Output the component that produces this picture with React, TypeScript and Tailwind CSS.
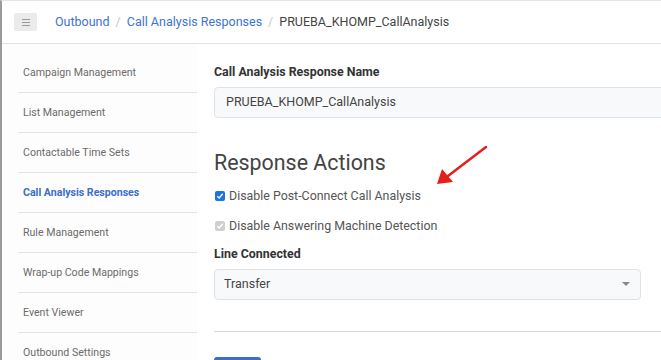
import React from "react";

const sideItems = [
  "Campaign Management",
  "List Management",
  "Contactable Time Sets",
  "Call Analysis Responses",
  "Rule Management",
  "Wrap-up Code Mappings",
  "Event Viewer",
  "Outbound Settings",
];

export default function App() {
  return (
    <div
      className="relative w-[661px] h-[360px] overflow-hidden bg-white border-l-2 border-l-[#9a9a9a] border-t border-t-[#e4e4e4] flex flex-col"
      style={{ fontFamily: "Roboto, 'Liberation Sans', sans-serif" }}
    >
      {/* header */}
      <div className="h-[43px] shrink-0 border-b border-[#e2e2e2] flex items-center pl-[12px]">
        <div className="w-[23px] h-[18px] bg-[#ebebeb] rounded-[2px] flex flex-col items-center justify-center gap-[2px]">
          <div className="w-[8px] h-[1px] bg-[#9a9a9a]" />
          <div className="w-[8px] h-[1px] bg-[#9a9a9a]" />
          <div className="w-[8px] h-[1px] bg-[#9a9a9a]" />
        </div>
        <div className="ml-[18px] flex items-center text-[12.5px] text-[#3d74cf]">
          <span>Outbound</span>
          <span className="mx-[6px] text-[#c8c8c8]">/</span>
          <span>Call Analysis Responses</span>
          <span className="mx-[6px] text-[#c8c8c8]">/</span>
          <span className="text-[#444]">PRUEBA_KHOMP_CallAnalysis</span>
        </div>
      </div>

      <div className="flex flex-1 min-h-0">
        {/* sidebar */}
        <div className="w-[195px] shrink-0 bg-[#fdfdfd] pt-[9px] pl-[16px]">
          {sideItems.map((t) => (
            <div
              key={t}
              className={
                "h-[40px] border-b border-[#e3e3e3] flex items-center pl-[5px] text-[10.6px] " +
                (t === "Call Analysis Responses"
                  ? "text-[#3b6fcc] font-bold"
                  : "text-[#6b6b6b]")
              }
            >
              {t}
            </div>
          ))}
        </div>

        {/* main */}
        <div className="flex-1 min-w-0 pl-[17px] pt-[20px]">
          <div className="text-[12.4px] font-bold text-[#333] leading-[16px]">
            Call Analysis Response Name
          </div>
          <div className="mt-[7px] w-[480px] h-[31px] bg-[#f8f9fa] border border-[#dfe3e8] rounded-[4px] flex items-center pl-[11px] text-[12.5px] text-[#444]">
            PRUEBA_KHOMP_CallAnalysis
          </div>

          <div className="mt-[31px] text-[21.4px] text-[#444] leading-[28px]">
            Response Actions
          </div>

          <div className="mt-[4px] h-[30px] flex items-center">
            <span className="w-[10px] h-[10px] ml-[1px] rounded-[2px] bg-[#1a73e8] flex items-center justify-center">
              <svg width="8" height="8" viewBox="0 0 8 8">
                <path d="M1.3 4.2 L3.2 6 L6.7 1.8" stroke="white" strokeWidth="1.4" fill="none" />
              </svg>
            </span>
            <span className="ml-[4px] text-[12.4px] text-[#555]">
              Disable Post-Connect Call Analysis
            </span>
          </div>
          <div className="h-[30px] flex items-center">
            <span className="w-[10px] h-[10px] ml-[1px] rounded-[2px] bg-[#cfcfcf] flex items-center justify-center">
              <svg width="8" height="8" viewBox="0 0 8 8">
                <path d="M1.3 4.2 L3.2 6 L6.7 1.8" stroke="white" strokeWidth="1.4" fill="none" />
              </svg>
            </span>
            <span className="ml-[4px] text-[12.4px] text-[#555]">
              Disable Answering Machine Detection
            </span>
          </div>

          <div className="mt-[5px] text-[12.4px] font-bold text-[#333] leading-[16px]">
            Line Connected
          </div>
          <div className="mt-[7px] w-[427px] h-[31px] bg-[#f8f9fa] border border-[#dfe3e8] rounded-[4px] flex items-center justify-between pl-[9px] pr-[10px] text-[12.5px] text-[#444]">
            <span>Transfer</span>
            <svg width="8" height="5" viewBox="0 0 8 5">
              <path d="M0 0 L8 0 L4 4 Z" fill="#888" />
            </svg>
          </div>

          <div className="mt-[31px] w-[480px] border-t border-[#d8d8d8]" />

          <div className="mt-[25px] w-[47px] h-[8px] bg-[#3a6fc4] rounded-t-[3px]" />
        </div>
      </div>

      {/* red arrow annotation */}
      <svg
        className="absolute left-0 top-0 pointer-events-none"
        width="661"
        height="360"
      >
        <line x1="484" y1="146" x2="446" y2="175" stroke="#e3201b" strokeWidth="2.5" strokeLinecap="round" />
        <path d="M435 183 L440 168 L451 181 Z" fill="#e3201b" />
      </svg>
    </div>
  );
}
